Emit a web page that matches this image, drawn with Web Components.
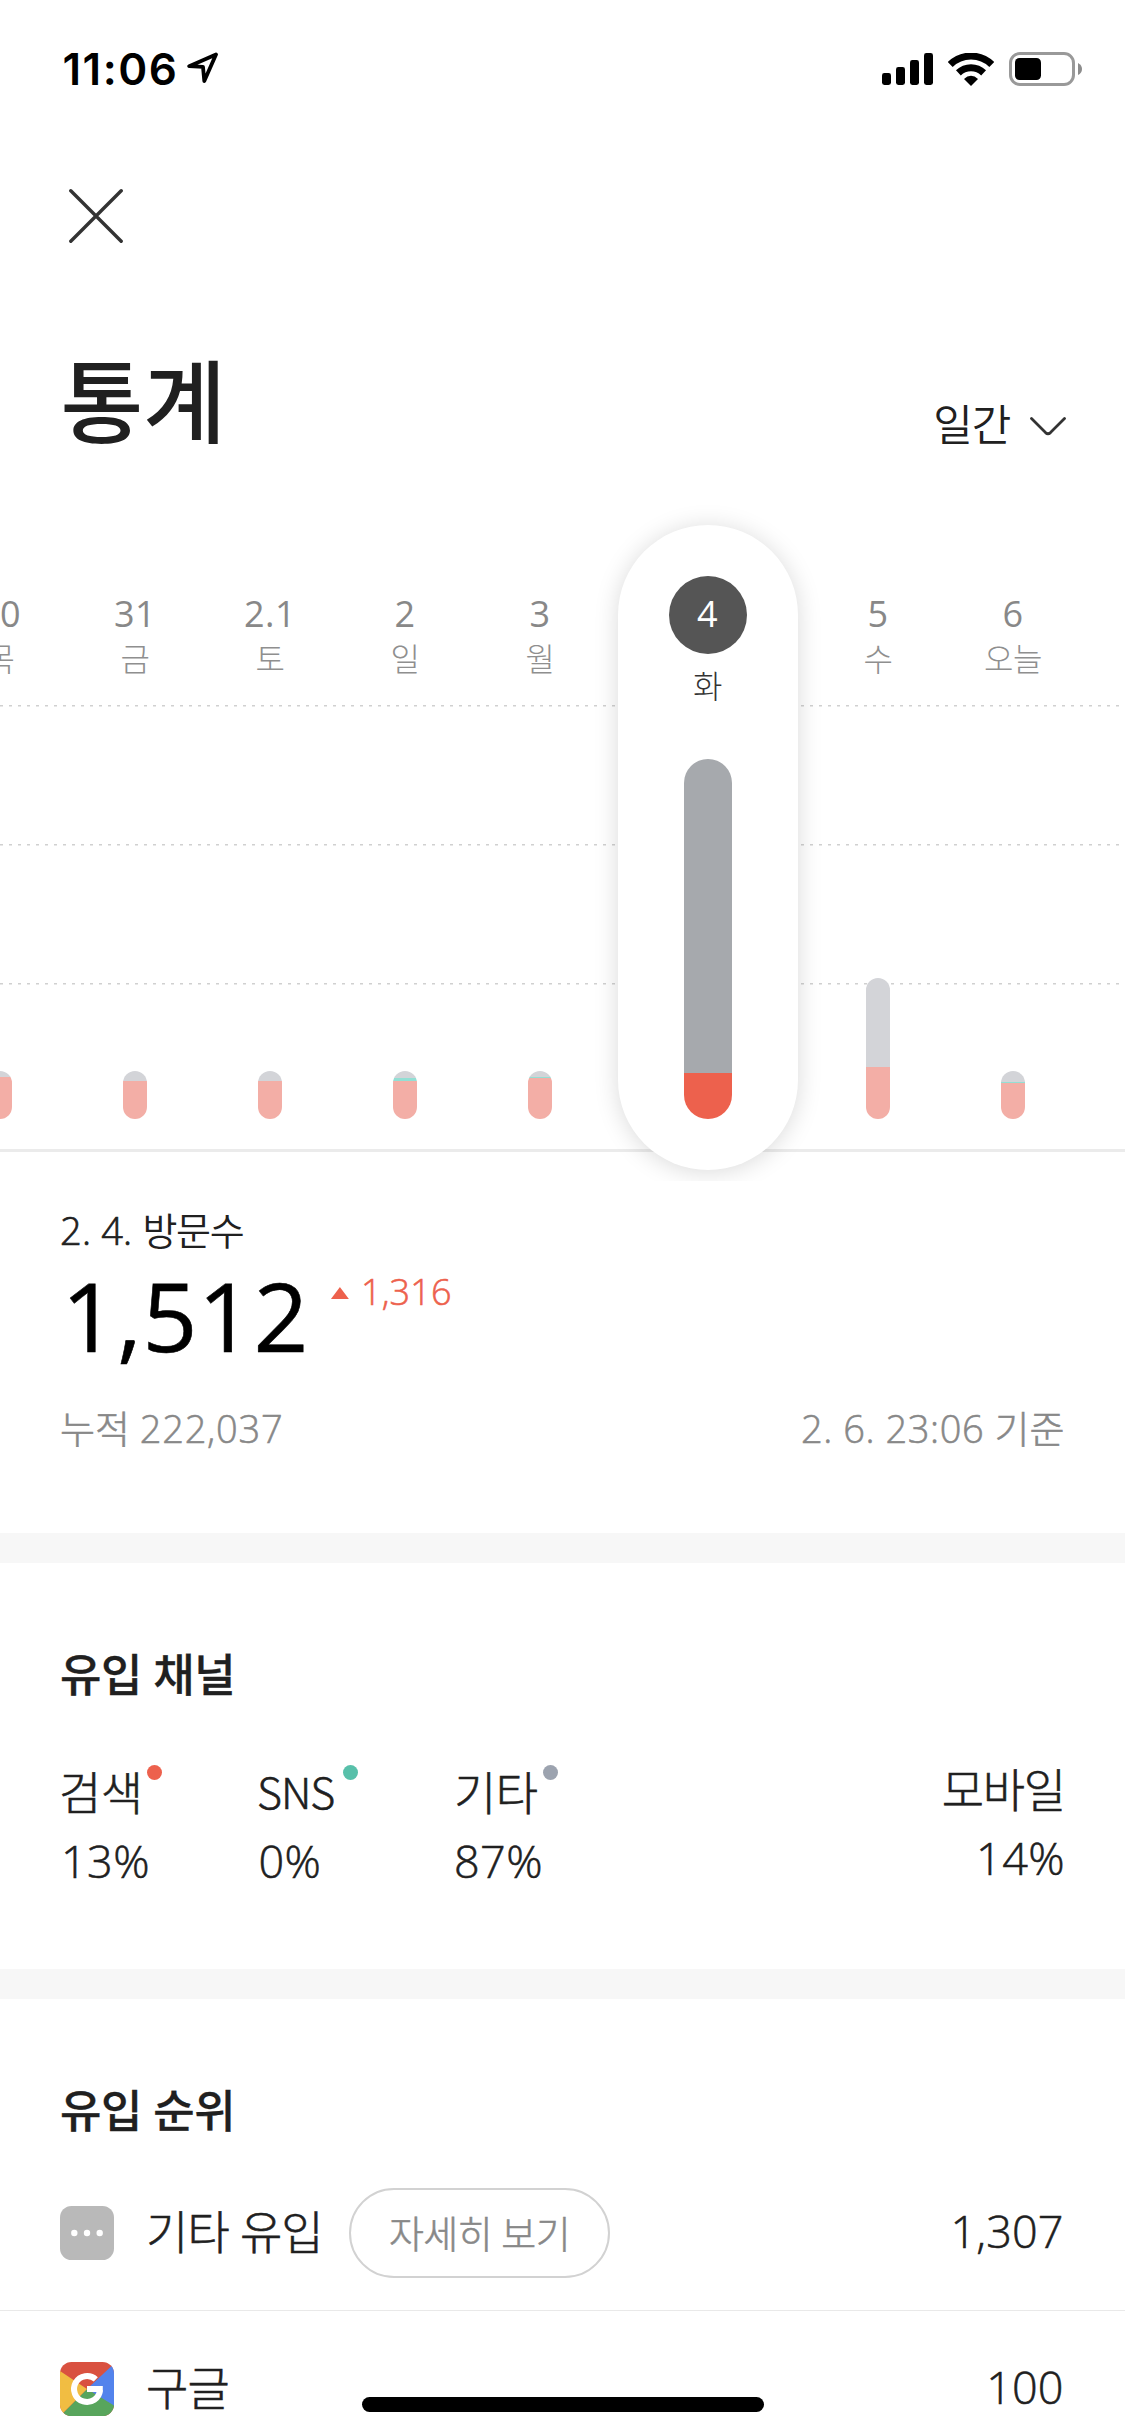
<!DOCTYPE html>
<html lang="ko">
<head>
<meta charset="utf-8">
<title>통계</title>
<style>
  html, body { margin: 0; background: #fff; }
  body { width: 1125px; height: 2436px; overflow: hidden; font-family: "Open Sans", "Noto Sans CJK KR", sans-serif; color: #202020; --book: .55px; }
</style>
</head>
<body>
<stats-screen></stats-screen>
<script>
const define = (name, render) => customElements.define(name, class extends HTMLElement {
  constructor() { super(); this.attachShadow({ mode: 'open' }); }
  connectedCallback() {
    const t = document.createElement('template');
    t.innerHTML = render(k => this.getAttribute(k), this);
    this.shadowRoot.replaceChildren(t.content.cloneNode(true));
  }
});
// Wraps the numeric runs of a mixed label so that they can carry their own spacing.
const mix = s => s.replace(/[\d][\d.,: ]*/g, m => `<span class="n">${m}</span>`);

define('status-bar', () => `
  <style>
    :host { display: flex; box-sizing: border-box; height: 99px; padding: 39px 43px 0 62.5px; align-items: center; color: #000; }
    time { font: 600 44px/60px Inter, sans-serif; letter-spacing: 1.5px; }
    svg { display: block; flex: none; }
    .location { margin-left: 8.5px; margin-bottom: 2px; }
    .signal { margin-left: auto; }
    .wifi { margin: 0 15px; }
  </style>
  <time>11:06</time>
  <svg class="location" width="32" height="32" viewBox="0 0 32 32"><path d="M29 2.5 2.2 14.2 16 14.8 17.3 29Z" fill="none" stroke="#000" stroke-width="3.8" stroke-linejoin="round"/></svg>
  <svg class="signal" width="51" height="32" viewBox="0 0 51 32"><rect y="20" width="9" height="12" rx="2.4"/><rect x="14" y="14" width="9" height="18" rx="2.4"/><rect x="28" y="7" width="9" height="25" rx="2.4"/><rect x="42" width="9" height="32" rx="2.4"/></svg>
  <svg class="wifi" width="46" height="33" viewBox="0 0 46 33">
    <path d="M23 33 16 25.9Q19.2 22.8 23 22.8T30 25.9Z"/>
    <path d="M10.4 19.9A18.2 18.2 0 0 1 35.6 19.9M2.2 11.6A29.6 29.6 0 0 1 43.8 11.6" fill="none" stroke="#000" stroke-width="7"/>
  </svg>
  <svg width="73" height="34" viewBox="0 0 73 34"><rect x="1.5" y="1.5" width="63" height="31" rx="9.5" fill="none" stroke="#999" stroke-width="3"/><rect x="6" y="6" width="26" height="22" rx="4.5"/><path d="M69 11Q73 13 73 17T69 23Z" fill="#8c8c8c"/></svg>`);

define('page-header', () => `
  <style>
    :host { display: flex; flex-direction: column; padding: 91px 59px 0 60.5px; }
    .close { width: 54px; height: 54px; margin: -1px 0 107px 8.5px; display: block; }
    .row { display: flex; justify-content: space-between; align-items: flex-start; height: 100px; }
    h1 { margin: 1px 0 0; font-weight: 500; font-size: 90px; line-height: 100px; }
    .period { display: flex; align-items: center; margin-top: 45px; font-weight: 350; font-size: 43px; line-height: 60px; letter-spacing: -1.2px; gap: 20px; }
    .period svg { margin-top: 3px; }
  </style>
  <svg class="close" viewBox="0 0 54 54"><path d="M1.8 1.8 52.2 52.2M52.2 1.8 1.8 52.2" stroke="#333" stroke-width="3.4" stroke-linecap="round"/></svg>
  <div class="row"><h1><slot></slot></h1><div class="period"><slot name="period"></slot>
    <svg width="36" height="19" viewBox="0 0 36 19"><path d="M1.5 1.5 15.5 15.6Q18 17.8 20.5 15.6L34.5 1.5" fill="none" stroke="#333" stroke-width="2.8" stroke-linecap="round"/></svg></div></div>`);

define('day-column', (a, el) => {
  const on = el.hasAttribute('selected');
  return `
  <style>
    :host { display: flex; flex: none; flex-direction: column; align-items: center; box-sizing: border-box;
      width: ${on ? 180 : 135}px; height: 645px; padding: 51px 0; ${on ? 'margin: 0 13px 0 10px; border-radius: 90px; background: #fff; box-shadow: 0 2px 24px rgba(0,0,0,.15);' : ''} }
    .date { width: 78px; height: 78px; border-radius: 50%; text-align: center; font-size: 36px; line-height: 76px; letter-spacing: .4px; white-space: nowrap;
      font-weight: 450; color: ${on ? '#fff' : '#888'}; background: ${on ? '#555' : 'none'}; }
    .day { margin-top: ${on ? 12 : -15}px; font-size: 32px; line-height: 40px; font-weight: 300; color: ${on ? '#333' : '#8f8f8f'}; white-space: nowrap; letter-spacing: -.4px; }
    .bar { display: flex; flex-direction: column; margin-top: auto; overflow: hidden; width: ${on ? 48 : 24}px; height: ${a('total')}px; border-radius: 24px; }
    .etc { flex: 1; background: ${on ? '#a6a9ad' : '#d3d4d8'}; }
    .sns { height: ${a('sns') || 0}px; background: #93dfd4; }
    .search { height: ${a('search')}px; background: ${on ? '#ed614d' : '#f3aea6'}; }
  </style>
  <div class="date">${a('date')}</div><div class="day">${a('day')}</div>
  <div class="bar"><div class="etc"></div><div class="sns"></div><div class="search"></div></div>`;
});

define('visit-chart', () => `
  <style>
    :host { --dash: repeating-linear-gradient(90deg, #d0d0d0 0 3px, transparent 3px 9px);
      display: flex; box-sizing: border-box; height: 681px; margin-top: 50px; padding-top: 25px; overflow: hidden;
      background: var(--dash) 0 205px / 100% 1.5px no-repeat, var(--dash) 0 344px / 100% 1.5px no-repeat, var(--dash) 0 483px / 100% 1.5px no-repeat,
        linear-gradient(#ebebeb, #ebebeb) 0 649px / 100% 3px no-repeat; }
    .days { display: flex; flex: none; margin-left: -67.5px; }
  </style>
  <div class="days"><slot></slot></div>`);

define('visit-summary', a => `
  <style>
    :host { display: flex; flex-direction: column; padding: 24px 60.5px 80px 60px; }
    .n { white-space: pre; }
    .label { font-size: 38px; line-height: 50px; letter-spacing: -1.3px; font-weight: 350; }
    .label .n { font-weight: 300; letter-spacing: .2px; -webkit-text-stroke: .7px; }
    .value { display: flex; align-items: flex-start; height: 100px; margin: 8px 0 40px 1.5px; color: #000; }
    .count { margin-top: 2px; font-size: 96px; line-height: 100px; font-weight: 500; letter-spacing: .6px; -webkit-text-stroke: .6px; }
    .delta { display: flex; align-items: center; gap: 12px; margin: 9px 0 0 22px; font-size: 36px; line-height: 40px; font-weight: 300; letter-spacing: .2px; color: #ed614d; -webkit-text-stroke: var(--book); }
    .delta i { width: 18px; height: 12px; margin-top: 2px; background: currentColor; clip-path: polygon(50% 0, 100% 100%, 0 100%); }
    .foot { display: flex; justify-content: space-between; font-size: 38px; line-height: 50px; font-weight: 300; color: #888; -webkit-text-stroke: var(--book); }
    .foot > span:first-child .n { letter-spacing: .75px; }
    .foot > span:last-child .n { letter-spacing: .55px; }
  </style>
  <div class="label">${mix(a('label'))}</div>
  <div class="value"><span class="count">${a('count')}</span><span class="delta"><i></i>${a('delta')}</span></div>
  <div class="foot"><span>${mix(a('total'))}</span><span>${mix(a('as-of'))}</span></div>`);

define('section-block', a => `
  <style>
    :host { display: block; border-top: 30px solid #f7f7f7; }
    h2 { margin: 0; padding: 83px 60px 0; font-size: 45px; line-height: 58px; font-weight: 500; letter-spacing: -.4px; -webkit-text-stroke: .3px; }
  </style>
  <h2>${a('heading')}</h2><slot></slot>`);

define('channel-stat', a => `
  <style>
    :host { display: flex; flex-direction: column; flex: none; font-weight: 300; -webkit-text-stroke: var(--book); }
    .name { display: flex; gap: ${a('gap') || 0}px; height: 60px; font-size: 46px; line-height: 60px; letter-spacing: ${a('tracking') || '-.5'}px; }
    .latin { font-family: "Noto Sans CJK KR", sans-serif; font-size: 43px; line-height: 57px; }
    .dot { width: 15px; height: 15px; margin-top: 3px; border-radius: 50%; background: ${a('color')}; }
    .pct { margin: 9px 0 0 ${a('inset') || 0}px; font-size: 45px; line-height: 60px; letter-spacing: .4px; }
  </style>
  <div class="name"><span class="${a('latin') !== null ? 'latin' : ''}">${a('name')}</span>${a('color') ? '<span class="dot"></span>' : ''}</div>
  <div class="pct">${a('value')}</div>`);

define('channel-row', () => `
  <style>
    :host { display: flex; height: 127px; padding: 58px 60px 80px 59px; align-items: flex-start; }
    ::slotted(.c1) { width: 198px; } ::slotted(.c2) { width: 197px; }
    ::slotted(.end) { margin: -3px 0 0 auto; align-items: flex-end; }
  </style><slot></slot>`);

define('rank-row', a => `
  <style>
    :host { display: flex; align-items: center; box-sizing: border-box; height: 156px; padding: 0 61.5px 0 60px; border-bottom: 1px solid #e9e9e9; font-weight: 300; -webkit-text-stroke: var(--book); }
    ::slotted(svg) { display: block; flex: none; }
    .name { width: 180px; margin: 0 23px 3px 32px; font-size: 46px; line-height: 60px; letter-spacing: -.9px; white-space: nowrap; }
    button { box-sizing: border-box; width: 261px; height: 90px; padding: 0; border: 2px solid #d2d2d2; border-radius: 45px; background: #fff;
      font: 300 38px/86px "Open Sans", "Noto Sans CJK KR", sans-serif; letter-spacing: -.6px; color: #888; -webkit-text-stroke: var(--book); }
    .count { margin: 0 0 3px auto; font-size: 45px; line-height: 60px; letter-spacing: .1px; }
  </style>
  <slot></slot><span class="name">${a('name')}</span>${a('action') ? `<button>${a('action')}</button>` : ''}<span class="count">${a('count')}</span>`);

define('home-indicator', () => `
  <style>:host { position: absolute; left: 362px; bottom: 24px; width: 402px; height: 15px; border-radius: 7.5px; background: #000; }</style>`);

define('stats-screen', () => `
  <style>
    :host { display: block; position: relative; width: 1125px; height: 2436px; overflow: hidden; background: #fff; }
    .ranks { display: block; margin-top: 15px; }
  </style>
  <status-bar></status-bar>
  <page-header>통계<span slot="period">일간</span></page-header>
  <visit-chart>
    <day-column date="30" day="목" total="48" search="42"></day-column>
    <day-column date="31" day="금" total="48" search="38"></day-column>
    <day-column date="2.1" day="토" total="48" search="38"></day-column>
    <day-column date="2" day="일" total="48" search="38" sns="3"></day-column>
    <day-column date="3" day="월" total="48" search="41" sns="1"></day-column>
    <day-column date="4" day="화" total="360" search="46" selected></day-column>
    <day-column date="5" day="수" total="141" search="52"></day-column>
    <day-column date="6" day="오늘" total="48" search="36" sns="1"></day-column>
  </visit-chart>
  <visit-summary label="2. 4. 방문수" count="1,512" delta="1,316" total="누적 222,037" as-of="2. 6. 23:06 기준"></visit-summary>
  <section-block heading="유입 채널">
    <channel-row>
      <channel-stat class="c1" name="검색" value="13%" color="#ed614d" gap="4.5" inset="2"></channel-stat>
      <channel-stat class="c2" name="SNS" value="0%" color="#58c0aa" gap="8.5" tracking="-1" inset="1.5" latin></channel-stat>
      <channel-stat name="기타" value="87%" color="#9ca3af" gap="5"></channel-stat>
      <channel-stat class="end" name="모바일" value="14%" tracking="-1.2"></channel-stat>
    </channel-row>
  </section-block>
  <section-block heading="유입 순위">
    <div class="ranks">
      <rank-row name="기타 유입" action="자세히 보기" count="1,307">
        <svg width="54" height="54" viewBox="0 0 54 54"><rect width="54" height="54" rx="11.5" fill="#b9b9b9"/><g fill="#fff"><circle cx="14.3" cy="27" r="3.2"/><circle cx="27" cy="27" r="3.2"/><circle cx="39.7" cy="27" r="3.2"/></g></svg>
      </rank-row>
      <rank-row name="구글" count="100">
        <svg width="54" height="54" viewBox="0 0 54 54">
          <clipPath id="tile"><rect width="54" height="54" rx="11.5"/></clipPath>
          <g clip-path="url(#tile)"><rect width="54" height="54" fill="#d95140"/><path d="M27 27 56 0V46Z" fill="#5383ec"/><path d="M27 27 54 43.500V54H0Z" fill="#58a55c"/><path d="M27 27 0 9V54Z" fill="#f1bd42"/></g>
          <path d="M35.800 17.400A13 13 0 1 0 40 28" fill="none" stroke="#fff" stroke-width="6"/><path d="M27 24H42.800Q43.200 28 42 31.500L36 30H27Z" fill="#fff"/>
        </svg>
      </rank-row>
    </div>
  </section-block>
  <home-indicator></home-indicator>`);
</script>
</body>
</html>
